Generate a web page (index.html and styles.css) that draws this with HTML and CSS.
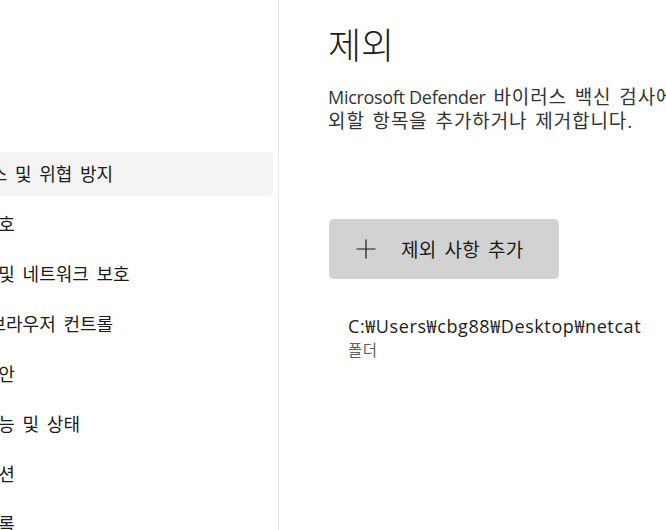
FILE: index.html
```html
<!DOCTYPE html>
<html lang="ko">
<head>
    <meta charset="UTF-8">
    <meta name="viewport" content="width=device-width, initial-scale=1.0">
    <title>Windows 보안 - 제외</title>
    <link rel="stylesheet" href="styles.css">
</head>
<body>
    <div class="app">
        <nav class="sidebar">
            <ul class="nav">
                <li class="nav-item active">바이러스 및 위협 방지</li>
                <li class="nav-item">계정 보호</li>
                <li class="nav-item">방화벽 및 네트워크 보호</li>
                <li class="nav-item">앱 및 브라우저 컨트롤</li>
                <li class="nav-item">장치 보안</li>
                <li class="nav-item">장치 성능 및 상태</li>
                <li class="nav-item">가족 옵션</li>
                <li class="nav-item">보호 기록</li>
            </ul>
        </nav>

        <main class="content">
            <h1 class="title">제외</h1>
            <p class="desc"><span class="brand">Microsoft Defender</span> 바이러스 백신 검사에서 제<br>외할 항목을 추가하거나 제거합니다.</p>

            <button class="add-btn">
                <svg class="plus" width="20" height="20" viewBox="0 0 20 20">
                    <path d="M10 0.5V19.5M0.5 10H19.5" stroke="#1a1a1a" stroke-width="1.2" fill="none"/>
                </svg>
                <span>제외 사항 추가</span>
            </button>

            <div class="exclusion">
                <div class="exclusion-path">C:₩Users₩cbg88₩Desktop₩netcat</div>
                <div class="exclusion-type">폴더</div>
            </div>
        </main>
    </div>
</body>
</html>
```

FILE: styles.css
```css
* { margin: 0; padding: 0; box-sizing: border-box; }
html, body { width: 666px; height: 530px; overflow: hidden; }
body {
    font-family: "Open Sans", "Noto Sans CJK KR", sans-serif;
    background: #ffffff;
    color: #1b1b1b;
}
.app {
    display: flex;
    width: 666px;
    height: 530px;
    overflow: hidden;
}

/* left navigation (partly scrolled out of view) */
.sidebar {
    flex: 0 0 279px;
    border-right: 1px solid #ebebeb;
    padding-top: 152px;
    background: #ffffff;
}
.nav {
    list-style: none;
    margin-left: -100px;
    margin-right: 5px;
}
.nav-item {
    height: 44px;
    line-height: 44px;
    margin-bottom: 6px;
    padding-left: 41px;
    font-size: 18px;
    word-spacing: 3px;
    white-space: nowrap;
    border-radius: 5px;
    color: #1b1b1b;
}
.nav-item.active { background: #f4f4f4; }

/* main pane */
.content {
    flex: 0 0 auto;
    width: 600px;
    padding: 22px 0 0 49px;
}
.title {
    font-size: 36px;
    font-weight: 300;
    line-height: 48px;
    color: #1b1b1b;
}
.desc {
    margin-top: 15px;
    font-size: 19px;
    line-height: 24px;
    letter-spacing: 0.9px;
    word-spacing: 2px;
    white-space: nowrap;
    color: #333333;
}
.desc .brand { font-size: 18px; letter-spacing: -0.3px; word-spacing: 0; }
.add-btn {
    display: flex;
    align-items: center;
    margin-top: 86px;
    margin-left: 1px;
    width: 230px;
    height: 60px;
    padding-left: 27px;
    border: none;
    border-radius: 5px;
    background: #d2d2d2;
    font-family: inherit;
    font-size: 19px;
    letter-spacing: 0.2px;
    word-spacing: 3px;
    color: #1b1b1b;
    cursor: pointer;
}
.add-btn .plus { flex: 0 0 20px; margin-right: 25px; }
.exclusion {
    margin-top: 35px;
    padding-left: 20px;
}
.exclusion-path {
    font-size: 18px;
    line-height: 24px;
    letter-spacing: 0.6px;
    color: #1b1b1b;
}
.exclusion-type {
    margin-top: 2px;
    font-size: 15.5px;
    line-height: 20px;
    letter-spacing: 0.5px;
    color: #5f5f5f;
}
```
